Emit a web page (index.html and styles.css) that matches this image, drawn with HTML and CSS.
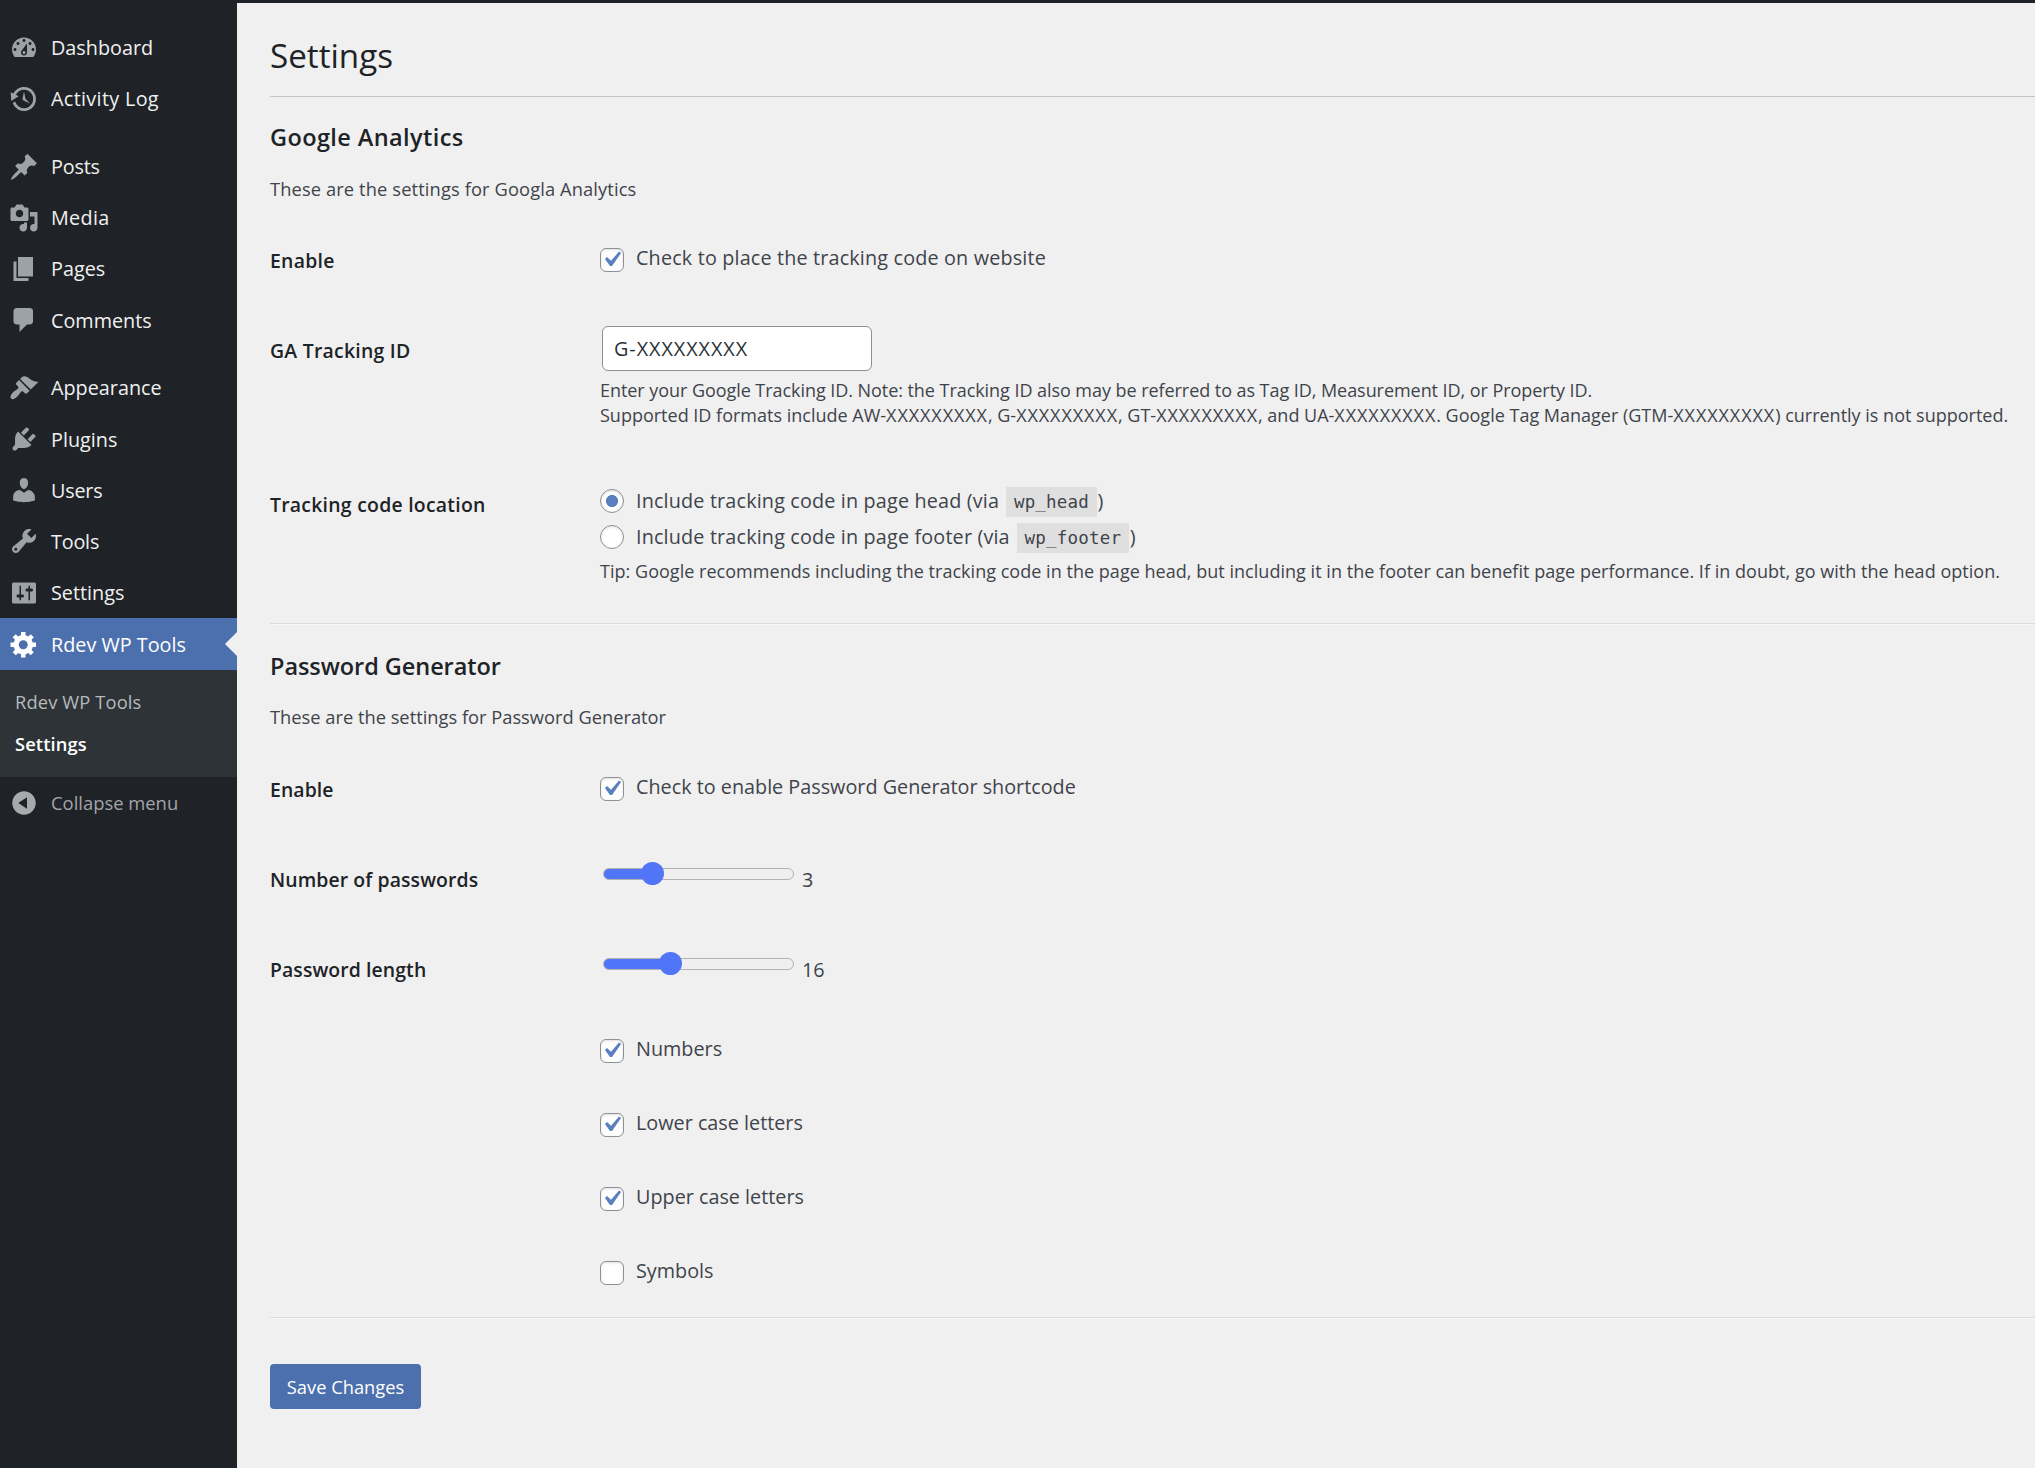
FILE: index.html
```html
<!DOCTYPE html>
<html lang="en">
<head>
<meta charset="utf-8">
<title>Settings</title>
<link rel="stylesheet" href="styles.css">
</head>
<body>
<nav class="sidebar">
  <ul class="menu">
    <li class="item"><svg class="icon" viewBox="0 0 20 20"><path d="M3.76 16h12.48c1.1-1.37 1.76-3.11 1.76-5 0-4.42-3.58-8-8-8s-8 3.58-8 8c0 1.89.66 3.63 1.76 5zM10 4c.55 0 1 .45 1 1s-.45 1-1 1-1-.45-1-1 .45-1 1-1zM6 6c.55 0 1 .45 1 1s-.45 1-1 1-1-.45-1-1 .45-1 1-1zm8 0c.55 0 1 .45 1 1s-.45 1-1 1-1-.45-1-1 .45-1 1-1zm-5.37 5.55L12 7v6c0 1.1-.9 2-2 2s-2-.9-2-2c0-.57.24-1.08.63-1.45zM4 10c.55 0 1 .45 1 1s-.45 1-1 1-1-.45-1-1 .45-1 1-1zm12 0c.55 0 1 .45 1 1s-.45 1-1 1-1-.45-1-1 .45-1 1-1zm-5 3c0-.55-.45-1-1-1s-1 .45-1 1 .45 1 1 1 1-.45 1-1z"/></svg><span>Dashboard</span></li>
    <li class="item"><svg class="icon" viewBox="0 0 20 20"><path d="M13.65 2.88c3.93 2.01 5.48 6.84 3.47 10.77s-6.83 5.48-10.77 3.47c-1.87-.96-3.2-2.56-3.86-4.4l1.64-1.03c.45 1.57 1.52 2.95 3.08 3.76 3.01 1.54 6.69.35 8.23-2.66 1.55-3.01.36-6.69-2.65-8.24C9.78 3.01 6.1 4.2 4.56 7.21l1.88.97-4.95 3.08-.39-5.82 1.78.91C4.9 2.4 9.75.89 13.65 2.88zm-4.36 7.83C9.11 10.53 9 10.28 9 10c0-.07.03-.12.04-.19h-.01L10 5l.97 4.81L14 13l-4.5-2.12.02-.02c-.08-.04-.16-.09-.23-.15z"/></svg><span class="wide">Activity Log</span></li>
    <li class="separator"></li>
    <li class="item"><svg class="icon" viewBox="0 0 20 20"><path d="M10.44 3.02l1.82-1.82 6.36 6.35-1.83 1.82c-1.05-.68-2.48-.57-3.41.36l-.75.75c-.92.93-1.04 2.35-.35 3.41l-1.83 1.82-2.41-2.41-2.8 2.79c-.42.42-3.38 2.71-3.8 2.29s1.86-3.39 2.28-3.81l2.79-2.79L4.1 9.36l1.83-1.82c1.05.69 2.48.57 3.4-.36l.75-.75c.93-.92 1.05-2.35.36-3.41z"/></svg><span class="snug">Posts</span></li>
    <li class="item"><svg class="icon" viewBox="0 0 20 20"><path d="M13 11V4c0-.55-.45-1-1-1h-1.67L9 1H5L3.67 3H2c-.55 0-1 .45-1 1v7c0 .55.45 1 1 1h10c.55 0 1-.45 1-1zM7 4.5c1.38 0 2.5 1.12 2.5 2.5S8.38 9.5 7 9.5 4.5 8.38 4.5 7 5.62 4.5 7 4.5zM14 6h5v10.5c0 1.38-1.12 2.5-2.5 2.5S14 17.88 14 16.5s1.12-2.5 2.5-2.5c.17 0 .34.02.5.05V9h-3V6zm-4 8.05V13h2v3.5c0 1.38-1.12 2.5-2.5 2.5S7 17.88 7 16.5 8.12 14 9.5 14c.17 0 .34.02.5.05z"/></svg><span class="wide">Media</span></li>
    <li class="item"><svg class="icon" viewBox="0 0 20 20"><path d="M6 15V2h10v13H6zm-1 1h8v2H3V5h2v11z"/></svg><span>Pages</span></li>
    <li class="item"><svg class="icon" viewBox="0 0 20 20"><path d="M5 2h9c1.1 0 2 .9 2 2v7c0 1.1-.9 2-2 2h-2l-5 5v-5H5c-1.1 0-2-.9-2-2V4c0-1.1.9-2 2-2z"/></svg><span>Comments</span></li>
    <li class="separator"></li>
    <li class="item"><svg class="icon" viewBox="0 0 20 20"><path d="M14.48 11.06L7.41 3.99l1.5-1.5c.5-.56 2.3-.47 3.51.32 1.21.8 1.43 1.28 2.91 2.1 1.18.64 2.45 1.26 4.45.85zm-.71.71L6.7 4.7 4.93 6.47c-.39.39-.39 1.02 0 1.41l1.06 1.06c.39.39.39 1.03 0 1.42-.6.6-1.43 1.11-2.21 1.69-.35.26-.7.53-1.01.84C1.43 14.23.4 16.08 1.4 17.07c.99 1 2.84-.03 4.18-1.36.31-.31.58-.66.85-1.02.57-.78 1.08-1.61 1.69-2.21.39-.39 1.02-.39 1.41 0l1.06 1.06c.39.39 1.02.39 1.41 0z"/></svg><span>Appearance</span></li>
    <li class="item"><svg class="icon" viewBox="0 0 20 20"><path d="M13.11 4.36L9.87 7.6 8 5.73l3.24-3.24c.35-.34 1.05-.2 1.56.32.52.51.66 1.21.31 1.55zm-8 1.77l.91-1.12 9.01 9.01-1.19.84c-.71.71-2.63 1.16-3.82 1.16H6.14L4.9 17.26c-.59.59-1.54.59-2.12 0-.59-.58-.59-1.53 0-2.12l1.24-1.24v-3.88c0-1.13.4-3.19 1.09-3.89zm7.26 3.97l3.24-3.24c.34-.35 1.04-.21 1.55.31.52.51.66 1.21.31 1.55l-3.24 3.25z"/></svg><span>Plugins</span></li>
    <li class="item"><svg class="icon" viewBox="0 0 20 20"><path d="M10 9.25c-2.27 0-2.73-3.44-2.73-3.44C7 4.02 7.82 2 9.97 2c2.16 0 2.98 2.02 2.71 3.81 0 0-.41 3.44-2.68 3.44zm0 2.57L12.72 10c2.39 0 4.52 2.33 4.52 4.53v2.49s-3.65 1.13-7.24 1.13c-3.65 0-7.24-1.13-7.24-1.13v-2.49c0-2.25 1.94-4.48 4.47-4.48z"/></svg><span class="snug">Users</span></li>
    <li class="item"><svg class="icon" viewBox="0 0 20 20"><path d="M16.68 9.77c-1.34 1.34-3.3 1.67-4.95.99l-5.41 6.52c-.99.99-2.59.99-3.58 0s-.99-2.59 0-3.57l6.52-5.42c-.68-1.65-.35-3.61.99-4.95 1.28-1.28 3.12-1.62 4.72-1.06l-2.89 2.89 2.82 2.82 2.86-2.87c.53 1.58.18 3.39-1.08 4.65zM3.81 16.21c.4.39 1.04.39 1.43 0 .4-.4.4-1.04 0-1.43-.39-.4-1.03-.4-1.43 0-.39.39-.39 1.03 0 1.43z"/></svg><span class="snug">Tools</span></li>
    <li class="item"><svg class="icon" viewBox="0 0 20 20"><path d="M18 16V4c0-.55-.45-1-1-1H3c-.55 0-1 .45-1 1v12c0 .55.45 1 1 1h14c.55 0 1-.45 1-1zM8 11h1c.55 0 1 .45 1 1s-.45 1-1 1H8v1.5c0 .28-.22.5-.5.5s-.5-.22-.5-.5V13H6c-.55 0-1-.45-1-1s.45-1 1-1h1V5.5c0-.28.22-.5.5-.5s.5.22.5.5V11zm5-2h-1c-.55 0-1-.45-1-1s.45-1 1-1h1V5.5c0-.28.22-.5.5-.5s.5.22.5.5V7h1c.55 0 1 .45 1 1s-.45 1-1 1h-1v5.5c0 .28-.22.5-.5.5s-.5-.22-.5-.5V9z"/></svg><span>Settings</span></li>
    <li class="item current"><svg class="icon" viewBox="0 0 20 20"><path d="M18 12h-2.18c-.17.7-.44 1.35-.81 1.93l1.54 1.54-2.1 2.1-1.54-1.54c-.58.36-1.23.63-1.91.79V19H8v-2.18c-.68-.16-1.33-.43-1.91-.79l-1.54 1.54-2.12-2.12 1.54-1.54c-.36-.58-.63-1.23-.79-1.91H1V9.03h2.17c.16-.7.44-1.35.8-1.94L2.43 5.55l2.1-2.1 1.54 1.54c.58-.37 1.24-.64 1.93-.81V2h3v2.18c.68.16 1.33.43 1.91.79l1.54-1.54 2.12 2.12-1.54 1.54c.36.59.64 1.24.8 1.94H18V12zm-8.5 1.5c1.66 0 3-1.34 3-3s-1.34-3-3-3-3 1.34-3 3 1.34 3 3 3z"/></svg><span>Rdev WP Tools</span></li>
  </ul>
  <ul class="submenu">
    <li>Rdev WP Tools</li>
    <li class="selected">Settings</li>
  </ul>
  <div class="item collapse"><svg class="icon" viewBox="0 0 20 20"><path d="M10 2.16c4.33 0 7.84 3.51 7.84 7.84s-3.51 7.84-7.84 7.84S2.16 14.33 2.16 10 5.71 2.16 10 2.16zm2 11.72V6.12L6.18 9.97z"/></svg><span>Collapse menu</span></div>
</nav>

<main class="content">
  <h1>Settings</h1>

  <section class="analytics">
    <h2>Google Analytics</h2>
    <p class="intro">These are the settings for Googla Analytics</p>
    <div class="row">
      <div class="name">Enable</div>
      <div class="field"><label class="check"><input type="checkbox" checked><svg class="tick" viewBox="0 0 20 20"><path d="M14.83 4.89l1.34.94-5.81 8.38H9.02L5.78 9.67l1.34-1.25 2.57 2.4z"/></svg><span>Check to place the tracking code on website</span></label></div>
    </div>
    <div class="row row-id">
      <div class="name">GA Tracking ID</div>
      <div class="field">
        <input class="text" type="text" value="G-XXXXXXXXX">
        <p class="help"><span class="note">Enter your Google Tracking ID. Note: the Tracking ID also may be referred to as Tag ID, Measurement ID, or Property ID.</span><br>Supported ID formats include AW-<span class="mask">XXXXXXXXX</span>, G-<span class="mask">XXXXXXXXX</span>, GT-<span class="mask">XXXXXXXXX</span>, and UA-<span class="mask">XXXXXXXXX</span>. Google Tag Manager (GTM-<span class="mask">XXXXXXXXX</span>) currently is not supported.</p>
      </div>
    </div>
    <div class="row row-location">
      <div class="name">Tracking code location</div>
      <div class="field">
        <label class="radio"><input type="radio" name="loc" checked><span>Include tracking code in page head (via <code>wp_head</code>)</span></label>
        <label class="radio"><input type="radio" name="loc"><span>Include tracking code in page footer (via <code>wp_footer</code>)</span></label>
        <p class="help tip">Tip: Google recommends including the tracking code in the page head, but including it in the footer can benefit page performance. If in doubt, go with the head option.</p>
      </div>
    </div>
  </section>

  <section class="passwords divided">
    <h2>Password Generator</h2>
    <p class="intro">These are the settings for Password Generator</p>
    <div class="row">
      <div class="name">Enable</div>
      <div class="field"><label class="check"><input type="checkbox" checked><svg class="tick" viewBox="0 0 20 20"><path d="M14.83 4.89l1.34.94-5.81 8.38H9.02L5.78 9.67l1.34-1.25 2.57 2.4z"/></svg><span>Check to enable Password Generator shortcode</span></label></div>
    </div>
    <div class="row">
      <div class="name">Number of passwords</div>
      <div class="field"><div class="slider"><input type="range" min="1" max="10" value="3" style="--fill: 25%"><output>3</output></div></div>
    </div>
    <div class="row row-length">
      <div class="name">Password length</div>
      <div class="field"><div class="slider"><input type="range" min="8" max="32" value="16" style="--fill: 35%"><output>16</output></div></div>
    </div>
    <div class="options">
      <label class="check"><input type="checkbox" checked><svg class="tick" viewBox="0 0 20 20"><path d="M14.83 4.89l1.34.94-5.81 8.38H9.02L5.78 9.67l1.34-1.25 2.57 2.4z"/></svg><span>Numbers</span></label>
      <label class="check"><input type="checkbox" checked><svg class="tick" viewBox="0 0 20 20"><path d="M14.83 4.89l1.34.94-5.81 8.38H9.02L5.78 9.67l1.34-1.25 2.57 2.4z"/></svg><span>Lower case letters</span></label>
      <label class="check"><input type="checkbox" checked><svg class="tick" viewBox="0 0 20 20"><path d="M14.83 4.89l1.34.94-5.81 8.38H9.02L5.78 9.67l1.34-1.25 2.57 2.4z"/></svg><span>Upper case letters</span></label>
      <label class="check"><input type="checkbox"><span>Symbols</span></label>
    </div>
  </section>

  <footer class="divided"><button class="save" type="button">Save Changes</button></footer>
</main>
</body>
</html>
```
FILE: styles.css
```css
* { box-sizing: border-box; }

body {
  margin: 0;
  height: 1468px;
  display: flex;
  overflow: hidden;
  background: #f0f0f0;
  color: #3f444b;
  font-family: "Open Sans", "Noto Sans", sans-serif;
  font-size: 19.8px;
}

h1, h2, p, ul { margin: 0; padding: 0; }
ul { list-style: none; }

/* Sidebar */
.sidebar {
  flex: none;
  width: 237px;
  padding-top: 22px;
  background: #1f2327;
  color: #f0f0f1;
}
.item {
  position: relative;
  display: flex;
  align-items: center;
  gap: 12px;
  height: 51.2px;
  padding-left: 9px;
  white-space: nowrap;
}
.item .wide { letter-spacing: .33px; }
.item .snug { letter-spacing: -.2px; }
.separator { height: 16.6px; }
.icon {
  flex: none;
  width: 30px;
  height: 30px;
  fill: #9ca2a7;
}
.current { background: #4c70ad; color: #fff; height: 52px; }
.current .icon { fill: #fff; }
.current::after {
  content: "";
  position: absolute;
  right: 0;
  top: 14px;
  border: 12px solid transparent;
  border-left: 0;
  border-right-color: #f0f0f0;
}
.submenu {
  height: 107px;
  padding: 11px 0 0 15px;
  background: #2d3337;
  color: #b7babc;
  font-size: 18.3px;
  line-height: 42px;
  letter-spacing: .14px;
}
.submenu .selected { color: #fff; font-weight: 600; }
.collapse { color: #a2a5a8; font-size: 18.4px; }
.collapse .icon { fill: #a7aaad; }

/* Content */
.content {
  flex: 1;
  min-width: 0;
  padding: 33px 0 0 33px;
  border-top: 3px solid #1f2327;
}
h1 {
  padding-bottom: 20px;
  border-bottom: 1px solid #c3c4c7;
  color: #1d2327;
  font-size: 33.2px;
  font-weight: 400;
  line-height: 40px;
}
h2 {
  padding-top: 24px;
  color: #1d2327;
  font-size: 23.5px;
  font-weight: 600;
  line-height: 32px;
}
.intro {
  margin: 23px 0 24px;
  font-size: 18.3px;
  line-height: 26px;
}
.analytics h2 { letter-spacing: .4px; }
.analytics .intro { letter-spacing: .12px; }
.analytics .name { letter-spacing: .26px; }
.analytics .check, .radio { letter-spacing: .16px; }
.passwords h2 { padding-top: 26px; letter-spacing: -.06px; }
.passwords .intro { margin: 22px 0 25px; }
.passwords .name { letter-spacing: .1px; }
.divided {
  border-top: 1px solid #dcdcde;
  box-shadow: inset 0 1px 0 #f6f7f7;
}
.row {
  display: grid;
  grid-template-columns: 330px 1fr;
  height: 90px;
}
.row-id { height: 154px; }
.row-location { height: 153px; }
.row-length { height: 82px; }
.name {
  padding-top: 21px;
  color: #1d2327;
  font-size: 19.4px;
  font-weight: 600;
  line-height: 28px;
}
.help {
  font-size: 18px;
  line-height: 25.3px;
  white-space: nowrap;
}
.note { letter-spacing: -.055px; }
.mask { letter-spacing: .92px; }
.tip { letter-spacing: .03px; }

.check {
  position: relative;
  display: flex;
  gap: 12px;
  padding-top: 18px;
  line-height: 28px;
}
input[type="checkbox"], input[type="radio"] {
  appearance: none;
  flex: none;
  width: 24px;
  height: 24px;
  margin: 4px 0 0;
  border: 1px solid #8c8f94;
  border-radius: 6px;
  background: #fff;
  box-shadow: inset 0 1px 3px rgba(0, 0, 0, .12);
}
.tick {
  position: absolute;
  left: -4px;
  top: 18px;
  width: 31px;
  height: 31px;
  fill: #5a80bf;
}
.options { padding-left: 330px; }
.options .check { height: 74px; }

.radio {
  display: flex;
  align-items: center;
  gap: 12px;
  height: 36px;
}
.radio span { padding-top: 2px; }
input[type="radio"] {
  margin: 0;
  border-radius: 50%;
}
input[type="radio"]:checked {
  background: radial-gradient(circle, #5a80bf 5.7px, #fff 6.3px);
}
.row-location .field { padding-top: 13px; }
.row-location .help { margin-top: 4px; }
code {
  display: inline-block;
  height: 30px;
  margin: 0 1px 0 2px;
  padding: 0 7.5px;
  background: #dfdfe0;
  font-family: "DejaVu Sans Mono", monospace;
  font-size: 17.5px;
  line-height: 31px;
  letter-spacing: .2px;
}

.text {
  display: block;
  width: 270px;
  height: 45px;
  margin: 10px 0 7px 2px;
  padding: 0 11px;
  border: 1px solid #8c8f94;
  border-radius: 6px;
  background: #fff;
  color: #2c3338;
  font: inherit;
  letter-spacing: .95px;
}

.slider {
  display: flex;
  align-items: flex-start;
  padding: 17px 0 0 3px;
}
input[type="range"] {
  appearance: none;
  width: 191px;
  height: 23px;
  margin: 0 8px 0 0;
  background: none;
}
input[type="range"]::-webkit-slider-runnable-track {
  height: 12px;
  border: 1px solid #b2b2b2;
  border-radius: 6px;
  background: linear-gradient(to right, #5175f7 var(--fill), #efefef var(--fill));
}
input[type="range"]::-webkit-slider-thumb {
  appearance: none;
  width: 23px;
  height: 23px;
  margin-top: -6.5px;
  border-radius: 50%;
  background: #5175f7;
}
output { line-height: 35px; }

footer { margin-top: 4px; padding-top: 46px; }
.save {
  width: 151px;
  height: 45px;
  padding: 0;
  border: 0;
  border-radius: 4px;
  background: #4c70ad;
  color: #fff;
  font: inherit;
  font-size: 18.3px;
}
```
